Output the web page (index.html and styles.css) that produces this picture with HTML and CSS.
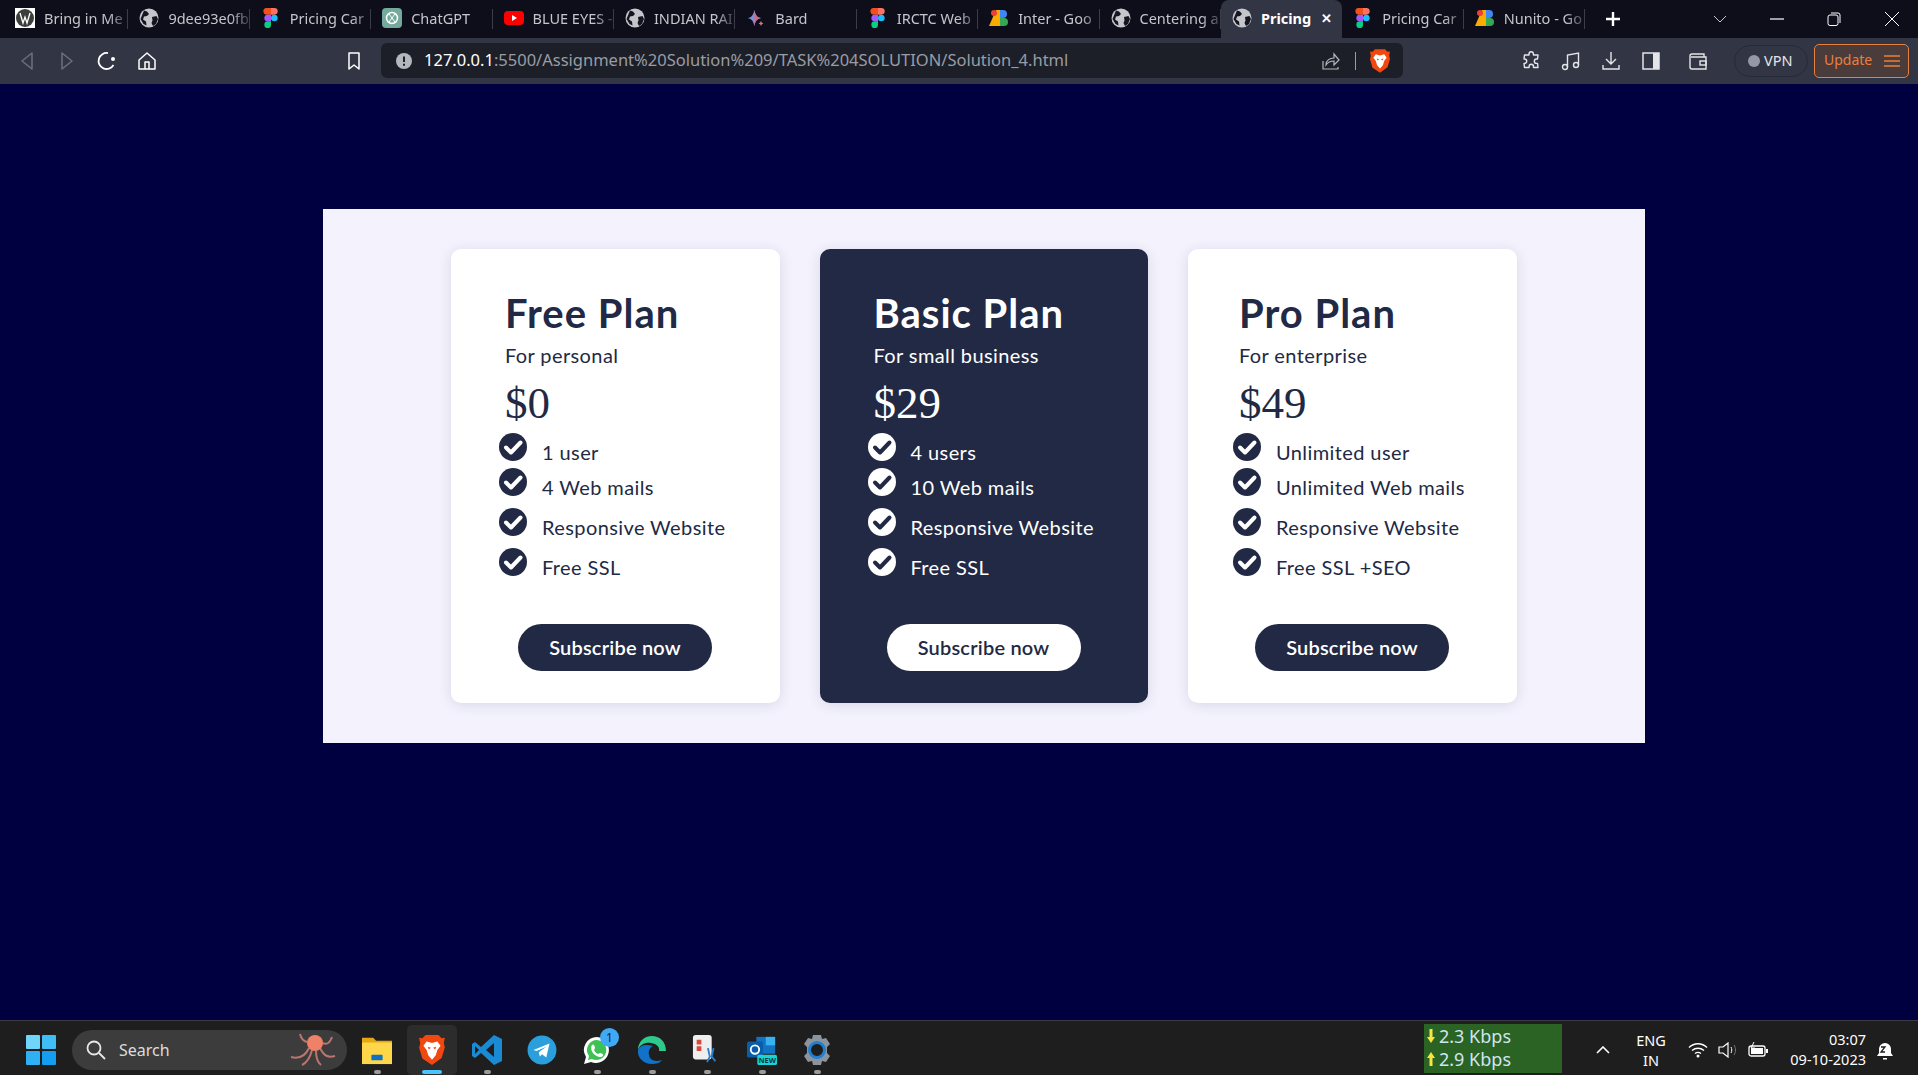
FILE: index.html
```html
<!doctype html>
<html>
<head>
	<title>Pricing</title>
	<link rel="stylesheet" href="styles.css">
</head>
<body>
	<svg class="defs" width="0" height="0">
		<symbol id="globe" viewBox="0 0 20 20">
			<circle cx="10" cy="10" r="9.5" fill="#c4c6cc"/>
			<path d="M5 2.500l3 1 2 2.500-2 2-3 .5-1 3 3 2 .5 4-3-1.500-3-5zM13 9l4.500-1 1.500 3-2 5-3 2-1.500-3 1-2.500z" fill="#14161f"/>
		</symbol>
		<symbol id="figma" viewBox="0 0 16 24">
			<path d="M2 0h6v8H4a4 4 0 0 1-2-8z" fill="#f24e1e"/>
			<path d="M8 0h4a4 4 0 0 1 0 8H8z" fill="#ff7262"/>
			<path d="M4 8h4v8H4a4 4 0 0 1 0-8z" fill="#a259ff"/>
			<circle cx="12" cy="12" r="4" fill="#1abcfe"/>
			<path d="M4 16h4v4a4 4 0 1 1-4-4z" fill="#0acf83"/>
		</symbol>
		<symbol id="gfonts" viewBox="0 0 20 20">
			<path d="M0 18L7 2h4v16z" fill="#f9ab00"/>
			<circle cx="5" cy="5" r="3" fill="#ea4335"/>
			<path d="M11 2h3a4 4 0 0 1 0 8h-3z" fill="#4285f4"/>
			<path d="M11 10h4a4 4 0 0 1 0 8h-4z" fill="#34a853"/>
		</symbol>
		<symbol id="brave" viewBox="0 0 24 28">
			<path d="M6 0h12l3 3 3-.500-1 5 1 4-3 10-9 6.500L3 22 0 12l1-4-1-5.500 3 .5z" fill="#f1480f"/>
			<path d="M7 6l5 1.500L17 6l3 4-3 4-1.500 5L12 23l-3.500-4L7 14l-3-4z" fill="#fff"/>
			<path d="M8 11l3 1-2 1.500zM16 11l-3 1 2 1.500z" fill="#f1480f"/>
		</symbol>
		<symbol id="tick" viewBox="0 0 28 28">
			<circle class="tick-disc" cx="14" cy="14" r="14"/>
			<path class="tick-mark" d="M7 14.500l5 5 9.500-10" fill="none" stroke-width="4" stroke-linecap="round" stroke-linejoin="round"/>
		</symbol>
	</svg>

	<div class="tabbar">
		<div class="tab tab-first">
			<svg class="fav" viewBox="0 0 20 20"><rect width="20" height="20" fill="#fff"/><circle cx="10" cy="10" r="9" fill="#3a3f3c"/><path d="M5 5l3 10 2-6 2 6 3-10" fill="none" stroke="#fff" stroke-width="1.300"/></svg>
			<span class="tab-name">Bring in Me</span>
		</div>
		<div class="tab"><svg class="fav"><use href="#globe"/></svg><span class="tab-name">9dee93e0fb</span></div>
		<div class="tab"><svg class="fav"><use href="#figma"/></svg><span class="tab-name">Pricing Car</span></div>
		<div class="tab">
			<svg class="fav" viewBox="0 0 20 20"><rect width="20" height="20" rx="4" fill="#74aa9c"/><circle cx="10" cy="10" r="5.500" fill="none" stroke="#fff" stroke-width="1.500"/><path d="M7 6l6 8M13 6l-6 8" stroke="#fff"/></svg>
			<span class="tab-name">ChatGPT</span>
		</div>
		<div class="tab">
			<svg class="fav" viewBox="0 0 20 20"><rect y="3" width="20" height="14" rx="4" fill="#f00"/><path d="M8 7l5 3-5 3z" fill="#fff"/></svg>
			<span class="tab-name">BLUE EYES -</span>
		</div>
		<div class="tab"><svg class="fav"><use href="#globe"/></svg><span class="tab-name">INDIAN RAI</span></div>
		<div class="tab">
			<svg class="fav" viewBox="0 0 20 24"><path d="M8 2c1 6 3 9 8 10-5 1-7 4-8 10-1-6-3-9-8-10 5-1 7-4 8-10z" fill="#7a8fe0"/><path d="M8 2c1 6 3 9 8 10-5 1-7 4-8 10z" fill="#c9707f"/><path d="M16 15c.3 2 1 3 3 3.500-2 .5-2.700 1.500-3 3.500-.3-2-1-3-3-3.500 2-.5 2.700-1.500 3-3.500z" fill="#d9768a"/></svg>
			<span class="tab-name">Bard</span>
		</div>
		<div class="tab"><svg class="fav"><use href="#figma"/></svg><span class="tab-name">IRCTC Web</span></div>
		<div class="tab"><svg class="fav"><use href="#gfonts"/></svg><span class="tab-name">Inter - Goo</span></div>
		<div class="tab"><svg class="fav"><use href="#globe"/></svg><span class="tab-name">Centering a</span></div>
		<div class="tab tab-active">
			<svg class="fav"><use href="#globe"/></svg>
			<span class="tab-name">Pricing</span>
			<span class="tab-close">✕</span>
		</div>
		<div class="tab"><svg class="fav"><use href="#figma"/></svg><span class="tab-name">Pricing Car</span></div>
		<div class="tab"><svg class="fav"><use href="#gfonts"/></svg><span class="tab-name">Nunito - Go</span></div>
		<svg class="new-tab" viewBox="0 0 14 14"><path d="M7 0v14M0 7h14" stroke="#fff" stroke-width="2.400"/></svg>
		<svg class="win-btn tab-list" viewBox="0 0 14 8"><path d="M1 1l6 6 6-6" fill="none" stroke="#c4c6cc"/></svg>
		<svg class="win-btn win-min" viewBox="0 0 14 14"><path d="M0 7h14" stroke="#fff" stroke-width="1.200"/></svg>
		<svg class="win-btn win-max" viewBox="0 0 14 14"><rect x="1" y="3" width="10" height="10.500" rx="2" fill="none" stroke="#fff"/><path d="M4 1h7a2 2 0 0 1 2 2v8" fill="none" stroke="#fff"/></svg>
		<svg class="win-btn win-close" viewBox="0 0 14 14"><path d="M0 0l14 14M14 0L0 14" stroke="#fff"/></svg>
	</div>

	<div class="toolbar">
		<button class="tool"><svg viewBox="0 0 14 20"><path d="M12 2L2 10l10 8z" fill="none" stroke="#6d707c" stroke-width="1.500" stroke-linejoin="round"/></svg></button>
		<button class="tool"><svg viewBox="0 0 14 20"><path d="M2 2l10 8-10 8z" fill="none" stroke="#6d707c" stroke-width="1.500" stroke-linejoin="round"/></svg></button>
		<button class="tool"><svg viewBox="0 0 20 20"><path d="M16.500 14A8 8 0 1 1 11 2.100" fill="none" stroke="#fff" stroke-width="1.800"/><circle cx="16" cy="8" r="2" fill="#fff"/></svg></button>
		<button class="tool"><svg viewBox="0 0 20 20"><path d="M2 9l8-7 8 7v9H2zM8 18v-7h4v7" fill="none" stroke="#fff" stroke-width="1.500" stroke-linejoin="round"/></svg></button>
		<button class="tool tool-mark"><svg viewBox="0 0 14 20"><path d="M2 2h10v16l-5-4-5 4z" fill="none" stroke="#fff" stroke-width="1.500" stroke-linejoin="round"/></svg></button>
		<div class="urlbar">
			<svg class="url-info" viewBox="0 0 16 16"><circle cx="8" cy="8" r="8" fill="#b5b7bd"/><path d="M8 3.500v5.500M8 10.800v2" stroke="#1c1f28" stroke-width="2"/></svg>
			<span class="url-text"><span class="url-host">127.0.0.1</span>:5500/Assignment%20Solution%209/TASK%204SOLUTION/Solution_4.html</span>
			<svg class="url-share" viewBox="0 0 18 18"><path d="M1 9v8h15v-2M4 13c0-5 4-7 8-7V2l5 6-5 5V9c-3 0-6 1-8 4z" fill="none" stroke="#b5b7bd" stroke-width="1.200"/></svg>
			<span class="url-sep"></span>
			<svg class="url-brave"><use href="#brave"/></svg>
		</div>
		<button class="tool tool-ext"><svg viewBox="0 0 20 20"><path d="M8 3a2.200 2.200 0 0 1 4.400 0l.1 1H17l-.5 4h-1a2.200 2.200 0 0 0 0 4.400h1l.5 4.100h-4.500v-1a2.200 2.200 0 0 0-4.400 0v1H3.500l-.5-4h.5a2.200 2.200 0 0 0 0-4.500H3l.5-4H8z" fill="none" stroke="#e4e5e8" stroke-width="1.400" stroke-linejoin="round"/></svg></button>
		<button class="tool"><svg viewBox="0 0 20 20"><circle cx="4" cy="16" r="2.500" fill="none" stroke="#e4e5e8" stroke-width="1.400"/><circle cx="15" cy="14" r="2.500" fill="none" stroke="#e4e5e8" stroke-width="1.400"/><path d="M6.500 16V4L17.500 2v12" fill="none" stroke="#e4e5e8" stroke-width="1.400"/></svg></button>
		<button class="tool"><svg viewBox="0 0 20 20"><path d="M10 1v12M5 8l5 5 5-5M2 14v4h16v-4" fill="none" stroke="#e4e5e8" stroke-width="1.400"/></svg></button>
		<button class="tool"><svg viewBox="0 0 20 20"><rect x="2" y="2" width="16" height="16" fill="none" stroke="#e4e5e8" stroke-width="1.500"/><rect x="12" y="2" width="6" height="16" fill="#e4e5e8"/></svg></button>
		<button class="tool tool-wallet"><svg viewBox="0 0 20 20"><path d="M2 5a2 2 0 0 1 2-2h12v3M2 5v11a2 2 0 0 0 2 2h14V6H3" fill="none" stroke="#e4e5e8" stroke-width="1.400"/><rect x="12" y="10" width="6" height="4" fill="none" stroke="#e4e5e8" stroke-width="1.400"/></svg></button>
		<div class="vpn"><span class="vpn-dot"></span>VPN</div>
		<div class="update">Update<svg viewBox="0 0 16 12"><path d="M0 1h16M0 6h16M0 11h16" stroke="#e97f3f" stroke-width="1.400"/></svg></div>
	</div>

	<main class="page">
		<section class="panel">
			<div class="card">
				<h2>Free Plan</h2>
				<p class="for">For personal</p>
				<p class="price">$0</p>
				<ul>
					<li><svg><use href="#tick"/></svg>1 user</li>
					<li><svg><use href="#tick"/></svg>4 Web mails</li>
					<li><svg><use href="#tick"/></svg>Responsive Website</li>
					<li><svg><use href="#tick"/></svg>Free SSL</li>
				</ul>
				<button class="subscribe">Subscribe now</button>
			</div>
			<div class="card card-dark">
				<h2>Basic Plan</h2>
				<p class="for">For small business</p>
				<p class="price">$29</p>
				<ul>
					<li><svg><use href="#tick"/></svg>4 users</li>
					<li><svg><use href="#tick"/></svg>10 Web mails</li>
					<li><svg><use href="#tick"/></svg>Responsive Website</li>
					<li><svg><use href="#tick"/></svg>Free SSL</li>
				</ul>
				<button class="subscribe">Subscribe now</button>
			</div>
			<div class="card card-pro">
				<h2>Pro Plan</h2>
				<p class="for">For enterprise</p>
				<p class="price">$49</p>
				<ul>
					<li><svg><use href="#tick"/></svg>Unlimited user</li>
					<li><svg><use href="#tick"/></svg>Unlimited Web mails</li>
					<li><svg><use href="#tick"/></svg>Responsive Website</li>
					<li><svg><use href="#tick"/></svg>Free SSL +SEO</li>
				</ul>
				<button class="subscribe">Subscribe now</button>
			</div>
		</section>
	</main>

	<footer class="taskbar">
		<svg class="start" viewBox="0 0 30 30">
			<rect width="14" height="14" rx="1" fill="#6fd5fb"/>
			<rect x="16" width="14" height="14" rx="1" fill="#3fbdf6"/>
			<rect y="16" width="14" height="14" rx="1" fill="#2fb0f5"/>
			<rect x="16" y="16" width="14" height="14" rx="1" fill="#139ef0"/>
		</svg>
		<div class="search">
			<svg class="search-glass" viewBox="0 0 20 20"><circle cx="8" cy="8" r="6.500" fill="none" stroke="#e8e8e8" stroke-width="1.800"/><path d="M13 13l6 6" stroke="#e8e8e8" stroke-width="1.800"/></svg>
			<span>Search</span>
			<svg class="search-art" viewBox="0 0 48 34"><path d="M20 15C16 24 10 26 2 24M23 17c-2 8-6 13-10 15M27 18c0 7 1 11 5 14M31 15c4 8 8 10 15 8M33 10c5 2 8 0 10-6M18 9C14 8 12 5 11 1" fill="none" stroke="#b9766f" stroke-width="2"/><ellipse cx="26" cy="10" rx="8" ry="8" fill="#ee8167"/></svg>
		</div>
		<div class="task-app task-first">
			<svg viewBox="0 0 32 30"><path d="M0 2h12l3 3h17v25H0z" fill="#e5a810"/><rect y="7" width="32" height="23" fill="#fdd64a"/><rect x="10" y="20" width="12" height="6" rx="1" fill="#0f70c4"/></svg>
			<i class="app-dot"></i>
		</div>
		<div class="task-app task-app-on">
			<svg><use href="#brave"/></svg>
			<i class="app-bar"></i>
		</div>
		<div class="task-app">
			<svg viewBox="0 0 30 30"><path d="M22 0l8 4v22l-8 4L9 18l-6 5-3-2v-12l3-2 6 5z" fill="#1a8ad4"/><path d="M22 8l-8 7 8 7z" fill="#1e1e1e"/><path d="M3 11v8l4-4z" fill="#1e1e1e"/></svg>
			<i class="app-dot"></i>
		</div>
		<div class="task-app">
			<svg viewBox="0 0 28 28"><circle cx="14" cy="14" r="13.500" fill="#2a9fdc"/><path d="M6 14l15-6-3 13-4-3-2 2-1-4 7-5-9 4z" fill="#fff"/></svg>
		</div>
		<div class="task-app">
			<svg viewBox="0 0 30 30"><path d="M15 2a13 13 0 0 0-11 20L2 29l7-2A13 13 0 1 0 15 2z" fill="#fff"/><path d="M15 5a10 10 0 0 0-8 16l-1 4 4-1A10 10 0 1 0 15 5z" fill="#3ec253"/><path d="M10 10c2-2 3 2 3 3l-1 2c1 2 2 3 4 4l2-1c1 0 4 1 3 3-2 2-5 1-8-1s-5-7-3-10z" fill="#fff"/></svg>
			<span class="app-badge">1</span>
			<i class="app-dot"></i>
		</div>
		<div class="task-app">
			<svg viewBox="0 0 30 30"><path d="M29 16C29 6 22 1 15 1 7 1 1 7 1 15c2-6 8-8 13-7 6 1 9 4 8 8h7z" fill="#2ec98b"/><path d="M1 15c-1 8 6 14 14 14 4 0 8-1 10-4-6 2-12 1-13-5-1-4 1-8 4-9C9 9 3 10 1 15z" fill="#1072c9"/></svg>
			<i class="app-dot"></i>
		</div>
		<div class="task-app">
			<svg viewBox="0 0 30 32"><rect width="20" height="26" rx="3" fill="#eeeeee"/><path d="M4 5h5v5H4zM4 12h5v5H4z" fill="#d64a3c"/><path d="M16 14l2 9-3 6M22 14l-2 9 4 5" fill="none" stroke="#2a7fc9" stroke-width="2"/></svg>
			<i class="app-dot"></i>
		</div>
		<div class="task-app">
			<svg viewBox="0 0 32 32"><path d="M10 2h20v18H10z" fill="#1272c4"/><path d="M20 2h10v9H20z" fill="#37b2ee"/><rect y="7" width="17" height="17" rx="2" fill="#0a5ca8"/><circle cx="8.500" cy="15.500" r="4.500" fill="none" stroke="#fff" stroke-width="2"/><rect x="11" y="21" width="21" height="11" rx="2" fill="#19d4d4"/><text class="new-text" x="21.500" y="30">NEW</text></svg>
			<i class="app-dot"></i>
		</div>
		<div class="task-app">
			<svg viewBox="0 0 30 30"><path d="M11 0h8l1 4 4-1 4 6-3 3v6l3 3-4 6-4-1-1 4h-8l-1-4-4 1-4-6 3-3v-6L2 9l4-6 4 1z" fill="#8b949c"/><circle cx="15" cy="15" r="7.500" fill="#1e1e1e" stroke="#1f7fd1" stroke-width="3"/></svg>
			<i class="app-dot"></i>
		</div>

		<div class="netspeed">
			<div class="net-row"><svg class="net-arrow" viewBox="0 0 8 14"><path d="M2.500 0h3v8H8l-4 6-4-6h2.500z"/></svg>2.3 Kbps</div>
			<div class="net-row"><svg class="net-arrow" viewBox="0 0 8 14"><path d="M2.500 14h3V6H8L4 0 0 6h2.500z"/></svg>2.9 Kbps</div>
		</div>
		<svg class="tray-caret" viewBox="0 0 14 8"><path d="M1 7l6-6 6 6" fill="none" stroke="#fff" stroke-width="1.600"/></svg>
		<div class="lang">ENG<br>IN</div>
		<svg class="tray-icon" viewBox="0 0 20 16"><path d="M1 5.500c5-5 13-5 18 0M4 8.500c3.500-3 8.500-3 12 0M7 11.500c2-1.500 4-1.500 6 0" fill="none" stroke="#fff" stroke-width="1.400"/><circle cx="10" cy="14" r="1.500" fill="#fff"/></svg>
		<svg class="tray-icon" viewBox="0 0 20 16"><path d="M1 5h4l5-4v14l-5-4H1z" fill="none" stroke="#fff" stroke-width="1.200"/><path d="M13 5c1 2 1 4 0 6" fill="none" stroke="#fff"/><path d="M16 3c2 3 2 7 0 10" fill="none" stroke="#777"/></svg>
		<svg class="tray-icon" viewBox="0 0 20 16"><rect x="1" y="4" width="16" height="10" rx="2" fill="none" stroke="#fff" stroke-width="1.300"/><rect x="3" y="6" width="12" height="6" fill="#fff"/><rect x="18" y="7" width="2" height="4" fill="#fff"/><path d="M6 0L3 6h4L5 10" fill="none" stroke="#fff"/></svg>
		<div class="clock">03:07<br>09-10-2023</div>
		<svg class="tray-bell" viewBox="0 0 20 20"><path d="M10 3a6 6 0 0 0-6 6v4l-2 3h16l-2-3V9a6 6 0 0 0-6-6z" fill="#fff"/><path d="M8 18h4v1.500H8z" fill="#fff"/><path d="M6 7h4l-4 5h4" fill="none" stroke="#1c1c1c" stroke-width="1.300"/></svg>
	</footer>
</body>
</html>
```

FILE: styles.css
```css
* {box-sizing: border-box;}
html, body {height: 100%;}
body {margin: 0; display: flex; flex-direction: column; height: 1075px; overflow: hidden; background: #000040; font-family: "Lato", sans-serif;}
p, h2, ul {margin: 0; padding: 0;}
button {border: 0; padding: 0; background: none; font: inherit;}
.defs {position: absolute;}

/* tab strip */
.tabbar {display: flex; align-items: center; height: 38px; padding-left: 7px; background: #0d0e19; flex: none;}
.tab {display: flex; align-items: center; width: 121.400px; height: 38px; padding: 0 0 2px 11px; position: relative; color: #c4c6cc; font: 14.500px "Noto Sans", sans-serif; flex: none;}
.tab-first {padding-left: 8px;}
.tab::after {content: ""; position: absolute; right: 0; top: 9px; height: 20px; width: 1px; background: #3a3c46;}
.tab-active {background: #323644; border-radius: 8px 8px 0 0; color: #fff; font-weight: 700;}
.tab-active::after {display: none;}
.fav {width: 20px; height: 20px; margin-right: 9px; flex: none;}
.tab-name {flex: 1; white-space: nowrap; -webkit-mask-image: linear-gradient(to right, #000 76%, rgba(0, 0, 0, .25) 98%); mask-image: linear-gradient(to right, #000 76%, rgba(0, 0, 0, .25) 98%);}
.tab-active .tab-name {-webkit-mask-image: none; mask-image: none;}
.tab-close {margin-right: 10px; font-size: 13px;}
.new-tab {width: 14px; height: 14px; margin-left: 21px; flex: none;}
.win-btn {width: 14px; height: 14px; flex: none;}
.tab-list {margin-left: 93px; height: 8px;}
.win-min {margin-left: 43px;}
.win-max {margin-left: 43px;}
.win-close {margin-left: 44px;}

/* address bar row */
.toolbar {display: flex; align-items: center; height: 46px; padding: 0 0 1px 7px; background: #323644; flex: none;}
.tool {width: 40px; height: 40px; display: flex; align-items: center; justify-content: center; flex: none;}
.tool svg {width: 20px; height: 20px;}
.tool-mark {margin-left: 167px;}
.urlbar {display: flex; align-items: center; width: 1022px; height: 35px; margin-left: 7px; padding-left: 15px; background: #1c1f28; border-radius: 6px; flex: none;}
.url-info {width: 16px; height: 16px; margin-right: 12px;}
.url-text {flex: 1; padding-bottom: 2px; color: #9a9ca4; font: 16.500px "Noto Sans", sans-serif; white-space: nowrap;}
.url-host {color: #fff;}
.url-share {width: 18px; height: 18px;}
.url-sep {width: 1px; height: 18px; margin: 0 14px 0 15px; background: #9a9ca4;}
.url-brave {width: 20px; height: 24px; margin-right: 13px;}
.tool-ext {margin-left: 108px;}
.tool-wallet {margin-left: 7px;}
.vpn {display: flex; align-items: center; width: 74px; height: 32px; margin-left: 16px; padding: 0 0 2px 13px; border: 1px solid #262a38; border-radius: 16px; color: #e4e5e8; font: 14.500px "Noto Sans", sans-serif; flex: none;}
.vpn-dot {width: 12px; height: 12px; margin: 2px 4px 0 0; background: #9598a6; border-radius: 50%;}
.update {display: flex; align-items: center; justify-content: space-between; width: 95px; height: 34px; margin-left: 6px; padding: 0 8px 2px 9px; background: #4a3c3a; border: 1px solid #e97f3f; border-radius: 5px; color: #e97f3f; font: 14px "Noto Sans", sans-serif; flex: none;}
.update svg {width: 16px; height: 12px; margin-top: 2px;}

/* page */
.page {flex: 1; padding: 125px 0 0 323px;}
.panel {display: flex; gap: 40px; width: 1322px; height: 534px; padding: 40px 0 0 128px; background: #f3f2fd;}
.card {display: flex; flex-direction: column; width: 328.500px; height: 454px; padding: 40px 0 0 54px; background: #fff; border-radius: 10px; box-shadow: 0 2px 14px rgba(34, 41, 68, .12); color: #222944; flex: none;}
.card-pro {padding-left: 51px;}
.card-dark {background: #222944; color: #fff; --disc: #fff; --mark: #222944;}
h2 {font-size: 40px; line-height: 48px; font-weight: 700; letter-spacing: 1px;}
.for {margin-top: 5px; font-size: 20px; line-height: 26px; letter-spacing: .4px;}
.price {margin-top: 9px; font: 45px/52px "Liberation Serif", serif;}
ul {margin: 4px 0 0 -6px; list-style: none;}
li {display: flex; height: 40px; padding-top: 6px; font-size: 20px; line-height: 26px; letter-spacing: .4px;}
li:first-child {height: 35px;}
li svg {width: 28px; height: 28px; margin: -6px 15px -20px 0; flex: none;}
.tick-disc {fill: var(--disc, #222944);}
.tick-mark {stroke: var(--mark, #fff);}
.subscribe {align-self: flex-start; width: 194px; height: 47px; margin-top: 36px; margin-left: 13px; padding-bottom: 1px; background: #222944; border-radius: 24px; color: #fff; font-size: 20px; font-weight: 600; letter-spacing: .2px;}
.card-dark .subscribe {background: #fff; color: #222944;}
.card-pro .subscribe {margin-left: 16px;}

/* windows taskbar */
.taskbar {display: flex; align-items: center; height: 55px; padding: 3px 0 0 26px; background: #1e1e1e; border-top: 1px solid #3a3a40; color: #fff; flex: none; font-family: "Noto Sans", sans-serif;}
.start {width: 30px; height: 30px; flex: none;}
.search {display: flex; align-items: center; width: 275px; height: 40px; margin-left: 16px; padding-left: 14px; background: #3c3c3c; border-radius: 20px; color: #dcdcdc; font-size: 16px; flex: none;}
.search-glass {width: 20px; height: 20px; margin-right: 13px;}
.search-art {width: 48px; height: 34px; margin-left: auto; margin-right: 10px;}
.task-app {display: flex; align-items: center; justify-content: center; position: relative; width: 50px; height: 50px; margin-right: 5px; border-radius: 5px; flex: none;}
.task-first {margin-left: 5px;}
.task-app svg {width: 30px; height: 30px;}
.task-app-on {background: #2c2c2c;}
.app-dot {position: absolute; bottom: 1px; left: 22px; width: 7px; height: 4px; background: #9a9a9a; border-radius: 2px;}
.app-bar {position: absolute; bottom: 1px; left: 15px; width: 20px; height: 4px; background: #4cc2ff; border-radius: 2px;}
.app-badge {position: absolute; top: 3px; right: 3px; width: 19px; height: 19px; background: #3fa9f5; border-radius: 50%; color: #1e1e1e; font-size: 12px; line-height: 19px; text-align: center;}
.new-text {fill: #083b44; font: 700 8px "Noto Sans", sans-serif; text-anchor: middle;}
.netspeed {width: 138px; height: 49px; margin: -3px 0 0 auto; padding: 1px 0 0 3px; background: #2a6323; color: #cfe6f0; font-size: 18px; line-height: 23px; flex: none;}
.net-row {display: flex; align-items: center;}
.net-arrow {width: 8px; height: 14px; margin-right: 4px; fill: #f5e642;}
.tray-caret {width: 14px; height: 8px; margin-left: 34px; flex: none;}
.lang {width: 40px; margin-left: 21px; font-size: 14.500px; line-height: 20px; text-align: center; flex: none;}
.tray-icon {width: 20px; height: 16px; margin-left: 10px; flex: none;}
.lang + .tray-icon {margin-left: 17px;}
.clock {width: 90px; margin: -2px 0 0 8px; font-size: 14.500px; line-height: 20px; text-align: right; flex: none;}
.tray-bell {width: 20px; height: 20px; margin: 0 23px 0 9px; flex: none;}
```
